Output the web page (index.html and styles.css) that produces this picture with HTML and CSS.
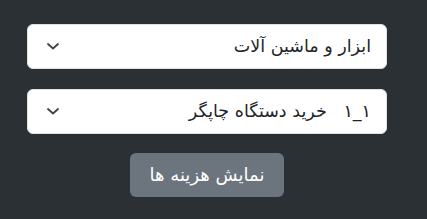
FILE: index.html
```html
<!DOCTYPE html>
<html lang="fa" dir="rtl">

<head>
    <meta charset="UTF-8">
    <title>هزینه ها</title>
    <link rel="stylesheet" href="styles.css">
</head>

<body>

    <div class="costs">
        <div class="costs__select">
            <span class="costs__value">ابزار و ماشین آلات</span>
            <svg class="costs__arrow" width="14" height="10" viewBox="0 0 14 10">
                <path d="M2 3l5 4.5 5-4.5" fill="none" stroke="#3d4349" stroke-width="1.8" stroke-linecap="round" stroke-linejoin="round" />
            </svg>
        </div>

        <div class="costs__select">
            <span class="costs__value">١_١&nbsp;&nbsp;&nbsp;خرید دستگاه چاپگر</span>
            <svg class="costs__arrow" width="14" height="10" viewBox="0 0 14 10">
                <path d="M2 3l5 4.5 5-4.5" fill="none" stroke="#3d4349" stroke-width="1.8" stroke-linecap="round" stroke-linejoin="round" />
            </svg>
        </div>

        <button class="costs__button">نمایش هزینه ها</button>
    </div>

</body>

</html>
```

FILE: styles.css
```css
* {
    padding: 0;
    margin: 0;
    box-sizing: border-box;
}

body {
    background-color: #2b3035;
    font-family: "DejaVu Sans", sans-serif;
}

.costs {
    width: 360px;
    margin-right: 40px;
    padding-top: 24px;
    display: flex;
    flex-direction: column;
    align-items: center;
    gap: 20px;
}

.costs__select {
    width: 100%;
    height: 45px;
    background-color: #fff;
    border: 1px solid #dee2e6;
    border-radius: 6px;
    display: flex;
    align-items: center;
    justify-content: space-between;
    padding: 0 15px 2px 18px;
    color: #212529;
    font-size: 17.5px;
}

.costs__arrow {
    flex-shrink: 0;
}

.costs__button {
    margin-top: -1px;
    width: 154px;
    height: 44px;
    background-color: #6c757d;
    border: none;
    border-radius: 6px;
    padding-bottom: 2px;
    color: #fff;
    font-family: "DejaVu Sans", sans-serif;
    font-size: 18px;
}
```
